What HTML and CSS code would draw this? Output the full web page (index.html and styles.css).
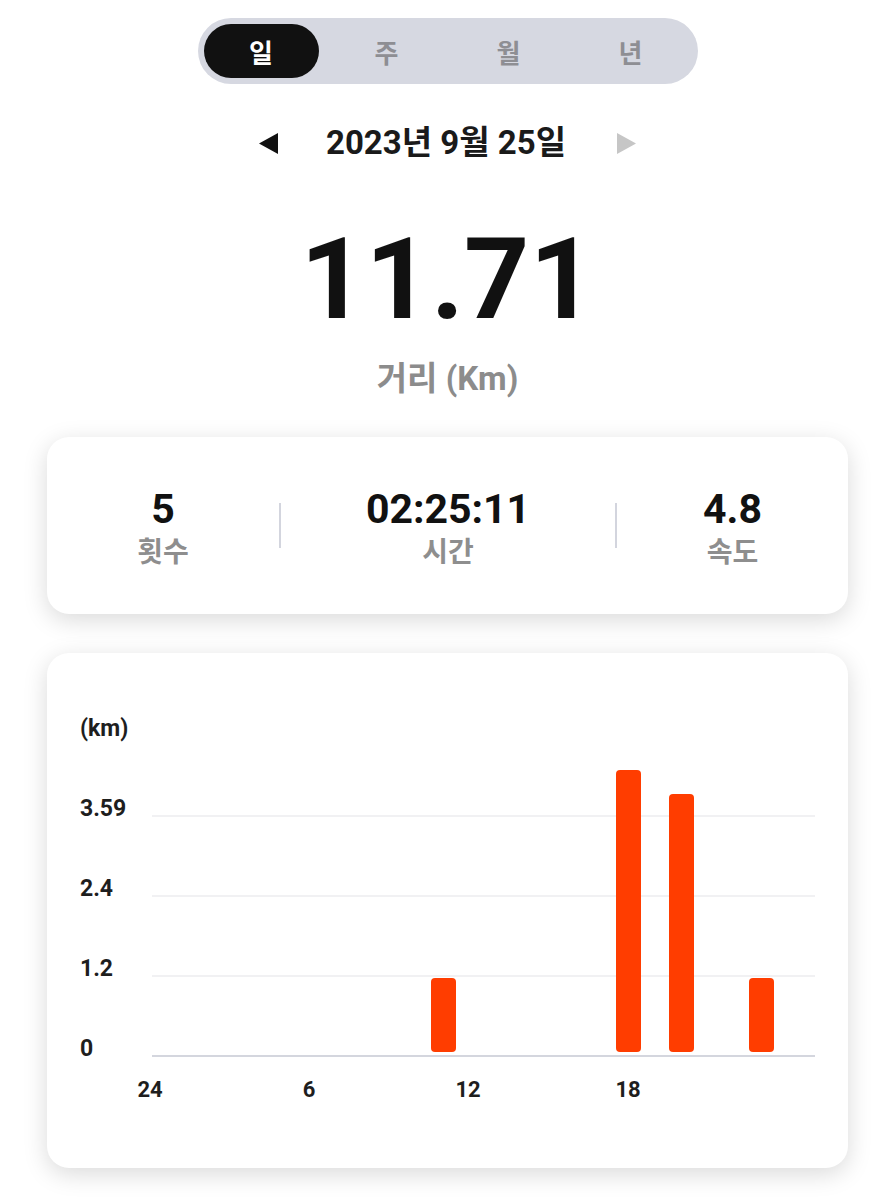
FILE: index.html
```html
<!DOCTYPE html>
<html lang="ko">
<head>
<meta charset="utf-8">
<title>거리</title>
<link rel="stylesheet" href="styles.css">
</head>
<body>
<main class="page">
  <nav class="seg">
    <div class="seg-item active">일</div>
    <div class="seg-item">주</div>
    <div class="seg-item">월</div>
    <div class="seg-item">년</div>
  </nav>

  <div class="date-row">
    <svg class="arrow" width="19" height="21" viewBox="0 0 19 21"><path d="M0 10.5 L19 0 L19 21 Z" fill="#111"/></svg>
    <div class="date-text">2023년 9월 25일</div>
    <svg class="arrow" width="19" height="21" viewBox="0 0 19 21"><path d="M19 10.5 L0 0 L0 21 Z" fill="#c6c6c6"/></svg>
  </div>

  <div class="big-number">11.71</div>
  <div class="big-label">거리 (Km)</div>

  <section class="card stats">
    <div class="stat">
      <div class="stat-value">5</div>
      <div class="stat-label">횟수</div>
    </div>
    <div class="divider"></div>
    <div class="stat">
      <div class="stat-value">02:25:11</div>
      <div class="stat-label">시간</div>
    </div>
    <div class="divider"></div>
    <div class="stat">
      <div class="stat-value">4.8</div>
      <div class="stat-label">속도</div>
    </div>
  </section>

  <section class="card chart-card">
    <div class="chart-body">
      <div class="y-label y-first"><span>(km)</span></div>
      <div class="y-label"><span>3.59</span></div>
      <div class="y-label"><span>2.4</span></div>
      <div class="y-label"><span>1.2</span></div>
      <div class="y-label"><span>0</span></div>

      <div class="plot">
        <div class="grid-row"></div>
        <div class="grid-row"></div>
        <div class="grid-row"></div>
        <div class="grid-row axis"></div>
        <div class="bar" style="left:278.5px;height:74px"></div>
        <div class="bar" style="left:464px;height:282px"></div>
        <div class="bar" style="left:517px;height:258px"></div>
        <div class="bar" style="left:596.5px;height:74px"></div>
      </div>

      <div class="x-axis">
        <span class="x-label" style="left:70px">24</span>
        <span class="x-label" style="left:229px">6</span>
        <span class="x-label" style="left:388px">12</span>
        <span class="x-label" style="left:548px">18</span>
      </div>
    </div>
  </section>
</main>
</body>
</html>
```

FILE: styles.css
```css
* { box-sizing: border-box; }

html, body {
  margin: 0;
  background: #ffffff;
}

body {
  font-family: Roboto, "Noto Sans CJK KR", sans-serif;
  color: #111111;
}

.page {
  width: 895px;
  display: flex;
  flex-direction: column;
  align-items: center;
  padding-top: 18px;
  padding-bottom: 40px;
}

/* segmented control */
.seg {
  width: 500px;
  height: 66px;
  padding: 6px;
  border-radius: 33px;
  background: #d6d8e1;
  display: grid;
  grid-template-columns: repeat(4, 1fr);
}

.seg-item {
  display: flex;
  align-items: center;
  justify-content: center;
  font-size: 26px;
  font-weight: 700;
  color: #8e8e93;
}

.seg-item.active {
  width: 115px;
  background: #111111;
  color: #ffffff;
  border-radius: 27px;
}

/* date */
.date-row {
  margin-top: 40px;
  height: 38px;
  display: flex;
  align-items: center;
}

.date-text {
  margin: 0 51px 0 48px;
  font-size: 33px;
  line-height: 38px;
  font-weight: 700;
  color: #1a1a1a;
}

.arrow { display: block; }

/* main figure */
.big-number {
  margin-top: 60px;
  font-size: 114px;
  line-height: 114px;
  font-weight: 700;
  color: #111111;
}

.big-label {
  margin-top: 24px;
  font-size: 33px;
  line-height: 38px;
  font-weight: 700;
  color: #8c8c8c;
}

/* cards */
.card {
  width: 801px;
  background: #ffffff;
  border-radius: 22px;
  box-shadow: 0 6px 24px rgba(0, 0, 0, 0.15);
}

.stats {
  margin-top: 39px;
  height: 177px;
  display: grid;
  grid-template-columns: 232px 2px 334px 2px 231px;
  align-items: center;
}

.stat {
  display: flex;
  flex-direction: column;
  align-items: center;
  padding-top: 3px;
}

.stat-value {
  font-size: 41px;
  line-height: 48px;
  font-weight: 700;
  color: #111111;
}

.stat-label {
  margin-top: 3px;
  font-size: 28px;
  line-height: 34px;
  font-weight: 700;
  color: #8e8e8e;
}

.divider {
  width: 2px;
  height: 45px;
  background: #d3d5de;
}

/* chart */
.chart-card {
  margin-top: 39px;
  padding: 56px 33px 65px 33px;
}

.chart-body {
  display: grid;
  grid-template-columns: 72px 663px;
  grid-template-rows: 28px 80px 80px 80px 80px 46px;
}

.y-label {
  grid-column: 1;
  display: flex;
  align-items: flex-end;
  font-size: 23px;
  line-height: 26px;
  font-weight: 700;
  color: #1e1e1e;
}

.y-label span {
  margin-bottom: -5px;
}

.plot {
  grid-column: 2;
  grid-row: 2 / 6;
  position: relative;
  display: flex;
  flex-direction: column;
}

.grid-row {
  flex: 1;
  border-bottom: 2px solid #f1f1f3;
}

.grid-row.axis {
  border-bottom-color: #d4d6de;
}

.bar {
  position: absolute;
  bottom: 5px;
  width: 25px;
  background: #ff3d00;
  border-radius: 4px;
}

.x-axis {
  grid-column: 1 / 3;
  grid-row: 6;
  position: relative;
}

.x-label {
  position: absolute;
  top: 20px;
  transform: translateX(-50%);
  font-size: 22px;
  line-height: 26px;
  font-weight: 700;
  color: #1e1e1e;
}
```
